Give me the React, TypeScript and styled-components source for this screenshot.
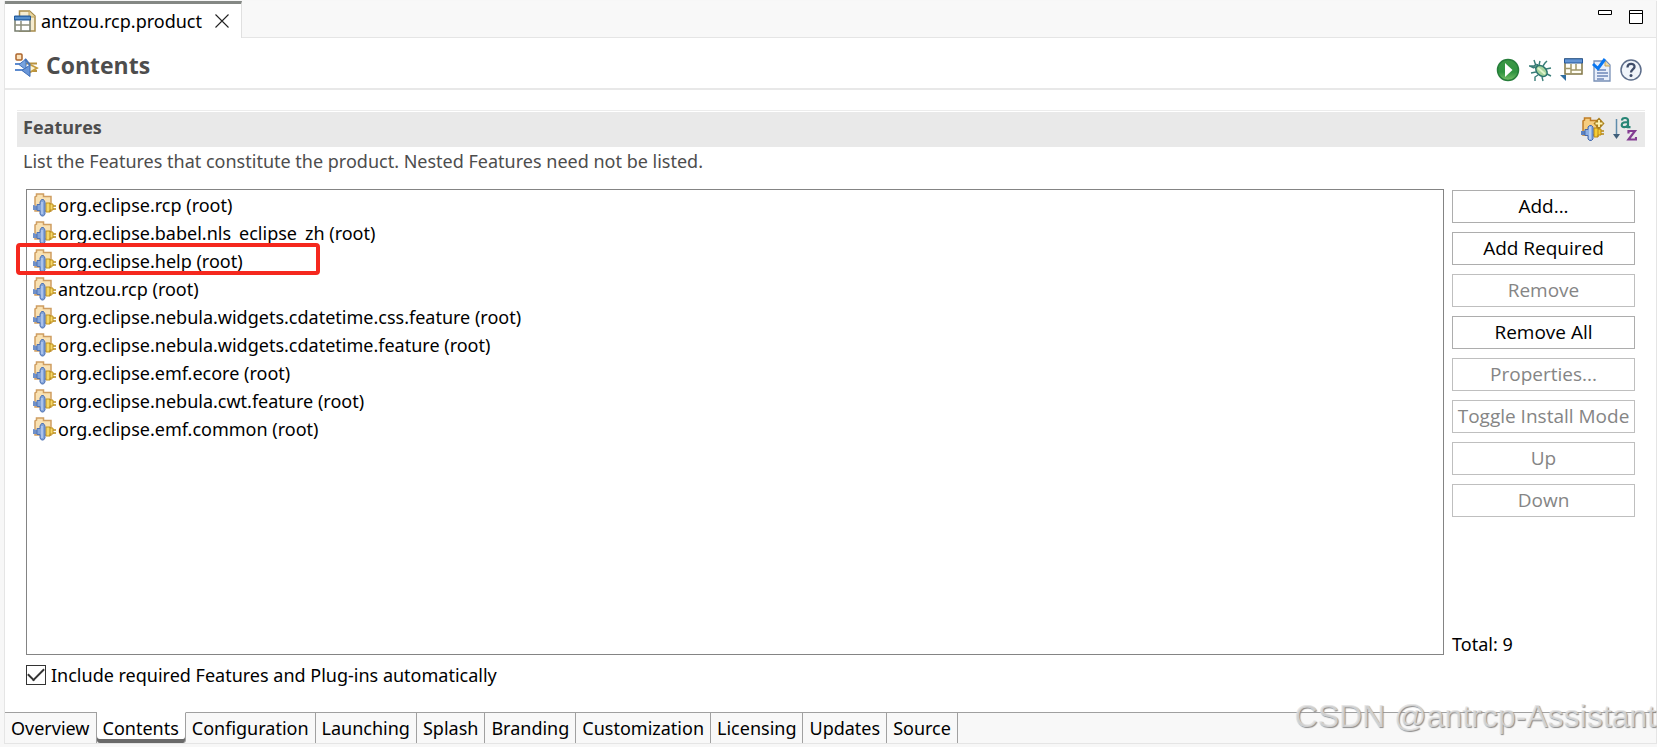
import React from "react";
import styled, { createGlobalStyle, css } from "styled-components";

const font = `"Noto Sans", "Noto Sans CJK SC", sans-serif`;
const controlFont = `"Open Sans", "Noto Sans", "Noto Sans CJK SC", sans-serif`;

const GlobalStyle = createGlobalStyle`
  * { box-sizing: border-box; }
  body { margin: 0; background: #f7f7f7; color: #000; font-family: ${font}; font-size: 18px; line-height: 28px; }
  button, input { font: inherit; color: inherit; }
  svg { display: block; flex: none; }
`;

const Page = styled.div`
  position: relative;
  display: flex;
  flex-direction: column;
  min-height: 100vh;
  padding: 1px 0 3px 4px;
`;

const Editor = styled.div`
  display: flex;
  flex-direction: column;
  flex: 1;
  background: #fff;
  border: 1px solid #e5e5e5;
  border-top: 0;
`;

const TabStrip = styled.header`
  display: flex;
  justify-content: space-between;
  height: 37px;
  background: #f8f8f8;
  border-bottom: 1px solid #e5e5e5;
`;

const FileTab = styled.div`
  display: flex;
  align-items: center;
  height: 37px;
  padding: 0 12px 1px 9px;
  background: #fff;
  border-top: 3px solid #848884;
  border-right: 1px solid #e0e0e0;
`;

const FileName = styled.span`
  margin: 0 13px 0 5px;
`;

const IconButton = styled.button`
  display: flex;
  padding: 0;
  border: 0;
  background: none;
`;

const WindowControls = styled.div`
  display: flex;
  align-items: flex-start;
  gap: 17px;
  padding: 8px 13px 0 0;
`;

const TitleBar = styled.div`
  display: flex;
  align-items: center;
  height: 52px;
  padding: 4px 14px 0 10px;
  border-bottom: 2px solid #e8e8e8;
`;

const Title = styled.h1`
  flex: 1;
  margin: 0 0 0 7px;
  color: #4d4d4d;
  font-family: ${controlFont};
  font-size: 23px;
  font-weight: 700;
  line-height: 32px;
`;

const Tools = styled.div<{ $low?: boolean }>`
  display: flex;
  align-items: center;
  gap: 8px;
  padding-top: ${(p) => (p.$low ? 10 : 0)}px;
`;

const Section = styled.section`
  display: flex;
  flex-direction: column;
  flex: 1;
  margin: 20px 11px 0 12px;
  border-top: 1px solid #ececec;
`;

const SectionHead = styled.div`
  display: flex;
  align-items: center;
  height: 35px;
  margin-top: 1px;
  padding: 0 8px 2px 6px;
  background: #e9e9e9;
`;

const SectionTitle = styled.h2`
  flex: 1;
  margin: 0 0 4px;
  color: #4d4d4d;
  font-family: ${controlFont};
  font-size: 18px;
  font-weight: 700;
  line-height: 28px;
`;

const Description = styled.p`
  margin: 0 6px 14px;
  color: #4d4d4d;
`;

const Body = styled.div`
  display: flex;
  flex: 1;
  gap: 8px;
  padding: 0 10px 0 9px;
`;

const FeatureList = styled.ul`
  flex: 1;
  margin: 0;
  padding: 1px 0 0 6px;
  list-style: none;
  border: 1px solid #848484;
`;

const Feature = styled.li`
  position: relative;
  display: flex;
  align-items: center;
  gap: 1px;
  height: 28px;
`;

const Highlight = styled.span`
  position: absolute;
  top: -4px;
  left: -17px;
  width: 304px;
  height: 32px;
  border: 4px solid #f5281e;
  border-radius: 4px;
`;

const Underscore = styled.span`
  color: transparent;
`;

const Side = styled.div`
  display: flex;
  flex-direction: column;
  gap: 9px;
  width: 183px;
  padding-top: 1px;
`;

const PushButton = styled.button`
  height: 33px;
  padding: 0 0 1px;
  color: #000;
  background: #fff;
  border: 1px solid #adadad;
  font-family: ${controlFont};
  font-size: 19px;
  white-space: nowrap;
  &:disabled { color: #858585; border-color: #bfbfbf; }
`;

const Total = styled.div`
  margin-top: auto;
  line-height: 22px;
`;

const Option = styled.label`
  display: flex;
  align-items: center;
  gap: 5px;
  margin: 6px 9px 23px;
`;

const Tick = styled.input`
  appearance: none;
  display: grid;
  place-items: center;
  width: 20px;
  height: 20px;
  margin: 0;
  border: 1px solid #333;
  background: #fff;
  &:checked::before {
    content: "";
    width: 14px;
    height: 7px;
    margin-bottom: 5px;
    border: solid #333;
    border-width: 0 0 2px 2px;
    transform: rotate(-45deg);
  }
`;

const PageTabs = styled.nav`
  display: flex;
  height: 31px;
  background: #f8f8f8;
`;

const PageTab = styled.button<{ $active?: boolean }>`
  padding: 0 6px 1px;
  color: #000;
  background: #f8f8f8;
  border: solid #a0a0a0;
  border-width: 1px 1px 0 0;
  white-space: nowrap;
  ${(p) =>
    p.$active &&
    css`
      background: #fff;
      border-top-color: #fff;
      box-shadow: inset 0 -4px #6a6a6a;
      border-radius: 0 0 3px 3px;
    `}
`;

const TabFiller = styled.div`
  flex: 1;
  border-top: 1px solid #a0a0a0;
`;

const Watermark = styled.div`
  position: absolute;
  right: 1px;
  bottom: 12px;
  color: rgba(225, 225, 225, 0.8);
  font-family: "Liberation Sans", sans-serif;
  font-size: 32px;
  line-height: 38px;
  text-shadow: 1px 1px 1px #8c8c8c;
  pointer-events: none;
`;

const ProductIcon = () => (
  <svg width="22" height="22" viewBox="0 0 22 22">
    <path d="M6.500 1h9L21 6v15H5.500V1z" fill="#f5ecd0" stroke="#a68c4c" strokeWidth="1.500" />
    <path d="M15 1v6h6" fill="#ead7a0" stroke="#bda05a" />
    <path d="M1 7h15v14H1z" fill="#fff" stroke="#777d6e" strokeWidth="1.500" />
    <path d="M.5 6h16v4H.5z" fill="#3875b8" stroke="#235b9c" />
    <path d="M1 8h15" stroke="#75a9dc" />
    <path d="M7 11v10M1 15h15" stroke="#8d8f7d" strokeWidth="1.500" />
  </svg>
);

const CloseIcon = () => (
  <svg width="14" height="14" viewBox="0 0 14 14">
    <path d="M.5.5l13 13M13.500.5L.5 13.500" stroke="#222" strokeWidth="1.100" fill="none" />
  </svg>
);

const ContentsIcon = () => (
  <svg width="24" height="24" viewBox="0 0 24 24">
    <path d="M11 10.500h11M14 18h8" fill="none" stroke="#b8913e" strokeWidth="2" />
    <path d="M14 11l8 4-8 5" fill="#fff3cf" stroke="#c39b3e" strokeWidth="1.800" />
    <path d="M0 11h6M0 17h8" stroke="#5d8bcf" strokeWidth="2" />
    <path d="M11 6v11l-7-5.500z" fill="#78a3de" stroke="#4574bb" />
    <path d="M15 12v11.500l-8-6z" fill="#6996d8" stroke="#3e6db5" />
    <path d="M10 6l5 6" stroke="#4574bb" strokeWidth="2" />
    <rect x="1" y="1" width="6" height="6" rx="1" fill="#fbe3bd" stroke="#ac642b" strokeWidth="1.500" />
  </svg>
);

const FeatureIcon = () => (
  <svg width="24" height="24" viewBox="0 0 24 24">
    <path d="M2 18V4L3.500 3V1h7v2.500H18V18z" fill="#f9e2b4" stroke="#cf9e62" strokeWidth="1.500" />
    <path d="M13 10h4v1h3v6h-3v2h-4z" fill="#f5d769" stroke="#c4951f" />
    <path d="M17 10v9" stroke="#b98c1c" />
    <path d="M20 13h3M20 16h3" stroke="#b98c1c" strokeWidth="1.500" />
    <path d="M1 12v5" stroke="#7f9ccc" strokeWidth="2" />
    <path d="M0 13h4v4H0z" fill="#6f90c8" />
    <path d="M4 11.500h3V9l1.500-2.500h2L12 9v12l-1.500 2h-2L7 21v-3.500H4z" fill="#82a4da" stroke="#5073b2" />
    <path d="M9 9v12" stroke="#b9cdee" strokeWidth="1.500" />
  </svg>
);

const AddFeatureIcon = () => (
  <svg width="24" height="24" viewBox="0 0 24 24">
    <path d="M2 18V4L3.500 3V1h6v2.500H16V18z" fill="#f6cd7f" stroke="#c07d26" strokeWidth="1.500" />
    <path d="M13 11h4v1h3v6h-3v2h-4z" fill="#f5cd35" stroke="#ba8611" />
    <path d="M17 11v9" stroke="#bd8b18" />
    <path d="M20 14h3M20 17h3" stroke="#b48716" strokeWidth="1.500" />
    <path d="M0 14h4v4H0z" fill="#5b82c2" />
    <path d="M4 12.500h3V10l1.500-1.500h2L12 10v12l-1.500 1.500h-2L7 22v-3.500H4z" fill="#8bafe4" stroke="#4468aa" />
    <path d="M9 10v12" stroke="#c6d8f5" strokeWidth="1.500" />
    <path d="M18 .5l5.500 6L18 12.500l-5.500-6z" fill="#a87e1b" />
    <path d="M18 3v7M14.500 6.500h7" stroke="#fff5b6" strokeWidth="1.800" />
  </svg>
);

const SortIcon = () => (
  <svg width="24" height="26" viewBox="0 0 24 26">
    <path d="M3.500 3v17" stroke="#5f8cac" strokeWidth="1.500" />
    <path d="M0 18h7l-3.500 5z" fill="#405f7a" />
    <path
      d="M9 4.500C9 2.500 10.500 2 12 2c2.200 0 3 1 3 2.500v6.700h2.500M15 6c-3 0-6.300.3-6.300 3 0 3 4.800 2.700 6.300 0"
      fill="none" stroke="#278575" strokeWidth="2.200"
    />
    <path d="M15.500 17.500V15h6.500L15.500 23.500H23V21" fill="none" stroke="#843d92" strokeWidth="2.200" />
  </svg>
);

const RunIcon = () => (
  <svg width="24" height="24" viewBox="0 0 24 24">
    <defs>
      <linearGradient id="run" x1="0" y1="0" x2="0" y2="1">
        <stop offset="0" stopColor="#3c9845" />
        <stop offset=".6" stopColor="#2f9440" />
        <stop offset="1" stopColor="#79c06a" />
      </linearGradient>
    </defs>
    <circle cx="12" cy="12" r="10.500" fill="url(#run)" stroke="#267d3a" strokeWidth="1.500" />
    <path d="M9 5l7.500 7L9 19z" fill="#fff" />
  </svg>
);

const BugIcon = () => (
  <svg width="24" height="24" viewBox="0 0 24 24">
    <path
      d="M8 8L6 2M11 7l1-4M6 10L2 8M8 14l-5 1M10 17l-3 2v4M14 19l1 4M15 8l2-3 2-2M18 11l5-1M19 16l4 2M6 8L1 8"
      fill="none" stroke="#397d78" strokeWidth="1.400"
    />
    <circle cx="8.500" cy="8.500" r="2.200" fill="#5a9b8b" stroke="#2d706c" />
    <ellipse cx="13.500" cy="13" rx="6.500" ry="4.500" transform="rotate(42 13.500 13)" fill="#a6d49c" stroke="#2d756f" strokeWidth="1.500" />
    <path d="M10 10l7 6" stroke="#e0f3cc" strokeWidth="2" />
  </svg>
);

const LayoutIcon = () => (
  <svg width="24" height="24" viewBox="0 0 24 24">
    <path d="M5 1h17v15H5z" fill="#fffdf3" stroke="#817646" strokeWidth="1.500" />
    <path d="M11 6v10M5 10.500h6M11 12h11M16 6v6" stroke="#a09668" strokeWidth="1.500" />
    <path d="M4.500.8h18V5h-18z" fill="#6394d2" stroke="#24579a" />
    <path d="M0 17h6v6z" fill="#306d9f" />
  </svg>
);

const ValidateIcon = () => (
  <svg width="20" height="24" viewBox="0 0 20 24">
    <path d="M2 3h12l4 4v16H2z" fill="#e8eefa" stroke="#7890b6" strokeWidth="1.300" />
    <path d="M13 3v5h5" fill="#f4dda1" stroke="#c0a15a" />
    <path d="M5 12h9M5 15h11M5 18h11M5 21h7" stroke="#6c87b8" strokeWidth="1.300" />
    <path d="M1 6l5 4.500L13 1" fill="none" stroke="#0877f2" strokeWidth="3" />
  </svg>
);

const HelpIcon = () => (
  <svg width="22" height="22" viewBox="0 0 22 22">
    <circle cx="11" cy="11" r="10" fill="#f0f4fa" stroke="#5d6d8a" strokeWidth="1.500" />
    <path d="M7.500 8.500C7.500 3.500 15 4 14.500 8c-.3 2.400-3.500 2.600-3.500 5.500" fill="none" stroke="#3e4c69" strokeWidth="2.300" />
    <circle cx="11" cy="16.500" r="1.500" fill="#3e4c69" />
  </svg>
);

const MinimizeIcon = () => (
  <svg width="14" height="14" viewBox="0 0 14 14">
    <path d="M.5 1.500h13v4H.5z" fill="#fff" stroke="#000" />
  </svg>
);

const MaximizeIcon = () => (
  <svg width="14" height="15" viewBox="0 0 14 15">
    <path d="M.5 1.500h13v13H.5zM.5 4.500h13" fill="#fff" stroke="#000" />
  </svg>
);

const features = [
  "org.eclipse.rcp",
  "org.eclipse.babel.nls_eclipse_zh",
  "org.eclipse.help",
  "antzou.rcp",
  "org.eclipse.nebula.widgets.cdatetime.css.feature",
  "org.eclipse.nebula.widgets.cdatetime.feature",
  "org.eclipse.emf.ecore",
  "org.eclipse.nebula.cwt.feature",
  "org.eclipse.emf.common",
];

const actions = [
  { label: "Add...", enabled: true },
  { label: "Add Required", enabled: true },
  { label: "Remove", enabled: false },
  { label: "Remove All", enabled: true },
  { label: "Properties...", enabled: false },
  { label: "Toggle Install Mode", enabled: false },
  { label: "Up", enabled: false },
  { label: "Down", enabled: false },
];

const pages = [
  "Overview", "Contents", "Configuration", "Launching", "Splash",
  "Branding", "Customization", "Licensing", "Updates", "Source",
];

const FeatureName = ({ name }: { name: string }) => (
  <span>
    {name.split("_").map((part, i) => (
      <React.Fragment key={part}>
        {i > 0 && <Underscore>_</Underscore>}
        {part}
      </React.Fragment>
    ))}
    {" (root)"}
  </span>
);

export default function App() {
  return (
    <>
      <GlobalStyle />
      <Page>
        <Editor>
          <TabStrip>
            <FileTab>
              <ProductIcon />
              <FileName>antzou.rcp.product</FileName>
              <IconButton aria-label="Close"><CloseIcon /></IconButton>
            </FileTab>
            <WindowControls>
              <IconButton aria-label="Minimize"><MinimizeIcon /></IconButton>
              <IconButton aria-label="Maximize"><MaximizeIcon /></IconButton>
            </WindowControls>
          </TabStrip>
          <TitleBar>
            <ContentsIcon />
            <Title>Contents</Title>
            <Tools $low>
              <IconButton aria-label="Run"><RunIcon /></IconButton>
              <IconButton aria-label="Debug"><BugIcon /></IconButton>
              <IconButton aria-label="Layout"><LayoutIcon /></IconButton>
              <IconButton aria-label="Validate"><ValidateIcon /></IconButton>
              <IconButton aria-label="Help"><HelpIcon /></IconButton>
            </Tools>
          </TitleBar>
          <Section>
            <SectionHead>
              <SectionTitle>Features</SectionTitle>
              <Tools>
                <IconButton aria-label="New feature"><AddFeatureIcon /></IconButton>
                <IconButton aria-label="Sort"><SortIcon /></IconButton>
              </Tools>
            </SectionHead>
            <Description>
              List the Features that constitute the product. Nested Features need not be listed.
            </Description>
            <Body>
              <FeatureList>
                {features.map((name) => (
                  <Feature key={name}>
                    <FeatureIcon />
                    <FeatureName name={name} />
                    {name === "org.eclipse.help" && <Highlight />}
                  </Feature>
                ))}
              </FeatureList>
              <Side>
                {actions.map((a) => (
                  <PushButton key={a.label} disabled={!a.enabled}>{a.label}</PushButton>
                ))}
                <Total>Total: 9</Total>
              </Side>
            </Body>
            <Option>
              <Tick type="checkbox" defaultChecked />
              Include required Features and Plug-ins automatically
            </Option>
          </Section>
          <PageTabs>
            {pages.map((p) => (
              <PageTab key={p} $active={p === "Contents"}>{p}</PageTab>
            ))}
            <TabFiller />
          </PageTabs>
        </Editor>
        <Watermark>CSDN @antrcp-Assistant</Watermark>
      </Page>
    </>
  );
}
